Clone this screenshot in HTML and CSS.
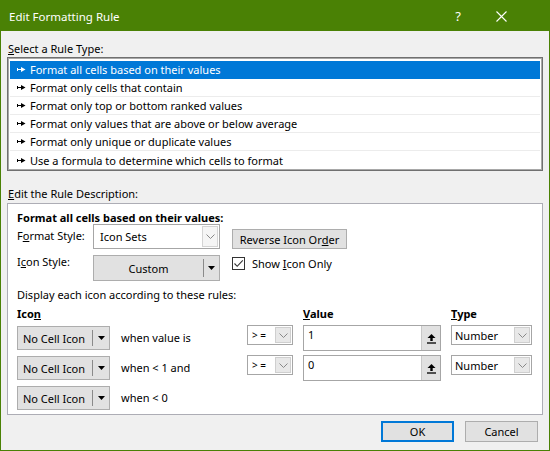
FILE: index.html
```html
<!DOCTYPE html>
<html>
<head>
<meta charset="utf-8">
<link rel="stylesheet" href="styles.css">
</head>
<body>
<div class="window">
  <div class="titlebar">
    <span class="title">Edit Formatting Rule</span>
    <span class="help">?</span>
    <span class="close"><svg width="11" height="11" viewBox="0 0 11 11"><path d="M0.5 0.5L10.5 10.5M10.5 0.5L0.5 10.5" stroke="#fff" stroke-width="1.1" fill="none"/></svg></span>
  </div>
  <div class="content">
    <div class="label"><u>S</u>elect a Rule Type:</div>
    <div class="listbox">
      <div class="item selected"><svg class="arr" width="9" height="7" viewBox="0 0 9 7"><path d="M0.5 2v3M0.5 3.5H4" stroke="currentColor" stroke-width="1" fill="none"/><path d="M4 1L8.5 3.5L4 6Z" fill="currentColor"/></svg>Format all cells based on their values</div>
      <div class="item"><svg class="arr" width="9" height="7" viewBox="0 0 9 7"><path d="M0.5 2v3M0.5 3.5H4" stroke="currentColor" stroke-width="1" fill="none"/><path d="M4 1L8.5 3.5L4 6Z" fill="currentColor"/></svg>Format only cells that contain</div>
      <div class="item"><svg class="arr" width="9" height="7" viewBox="0 0 9 7"><path d="M0.5 2v3M0.5 3.5H4" stroke="currentColor" stroke-width="1" fill="none"/><path d="M4 1L8.5 3.5L4 6Z" fill="currentColor"/></svg>Format only top or bottom ranked values</div>
      <div class="item"><svg class="arr" width="9" height="7" viewBox="0 0 9 7"><path d="M0.5 2v3M0.5 3.5H4" stroke="currentColor" stroke-width="1" fill="none"/><path d="M4 1L8.5 3.5L4 6Z" fill="currentColor"/></svg>Format only values that are above or below average</div>
      <div class="item"><svg class="arr" width="9" height="7" viewBox="0 0 9 7"><path d="M0.5 2v3M0.5 3.5H4" stroke="currentColor" stroke-width="1" fill="none"/><path d="M4 1L8.5 3.5L4 6Z" fill="currentColor"/></svg>Format only unique or duplicate values</div>
      <div class="item last"><svg class="arr" width="9" height="7" viewBox="0 0 9 7"><path d="M0.5 2v3M0.5 3.5H4" stroke="currentColor" stroke-width="1" fill="none"/><path d="M4 1L8.5 3.5L4 6Z" fill="currentColor"/></svg>Use a formula to determine which cells to format</div>
    </div>
    <div class="label label-desc"><u>E</u>dit the Rule Description:</div>
    <div class="desc">
      <div class="heading">Format all cells based on their values:</div>
      <div class="style-grid">
        <div class="flabel">F<u>o</u>rmat Style:</div>
        <div class="combo combo-style">
          <span class="combo-text">Icon Sets</span>
          <span class="dd"><svg width="9" height="5" viewBox="0 0 9 5"><path d="M0.5 0.5L4.5 4.5L8.5 0.5" stroke="#888" fill="none"/></svg></span>
        </div>
        <div class="btn btn-rev">Reverse Icon Or<u>d</u>er</div>
        <div class="flabel flabel2">I<u>c</u>on Style:</div>
        <div class="split split-style">
          <span class="split-text">Custom</span>
          <span class="split-arrow"><svg width="7" height="4" viewBox="0 0 7 4"><path d="M0 0H7L3.5 4Z" fill="#000"/></svg></span>
        </div>
        <div class="check">
          <span class="box"><svg width="11" height="11" viewBox="0 0 11 11"><path d="M1.5 5.5L4.2 8.3L9.8 2.3" stroke="#333" stroke-width="1.1" fill="none"/></svg></span>
          <span>Show <u>I</u>con Only</span>
        </div>
      </div>
      <div class="display">Display each icon according to these rules:</div>
      <div class="rules">
        <div class="hdr">Ico<u>n</u></div>
        <div></div>
        <div></div>
        <div class="hdr"><u>V</u>alue</div>
        <div class="hdr"><u>T</u>ype</div>

        <div class="split split-icon">
          <span class="split-text">No Cell Icon</span>
          <span class="split-arrow"><svg width="7" height="4" viewBox="0 0 7 4"><path d="M0 0H7L3.5 4Z" fill="#000"/></svg></span>
        </div>
        <div class="when">when value is</div>
        <div class="combo combo-op">
          <span class="combo-text op-text">&gt; =</span>
          <span class="dd dd-small"><svg width="9" height="5" viewBox="0 0 9 5"><path d="M0.5 0.5L4.5 4.5L8.5 0.5" stroke="#888" fill="none"/></svg></span>
        </div>
        <div class="value">
          <span class="value-text">1</span>
          <span class="ref"><svg width="11" height="11" viewBox="0 0 11 11"><path d="M5.5 1L1.5 5H4.3V8H6.7V5H9.5Z" fill="#000"/><path d="M1 10H10" stroke="#000" stroke-width="1.3"/></svg></span>
        </div>
        <div class="combo combo-type">
          <span class="combo-text">Number</span>
          <span class="dd dd-small"><svg width="9" height="5" viewBox="0 0 9 5"><path d="M0.5 0.5L4.5 4.5L8.5 0.5" stroke="#888" fill="none"/></svg></span>
        </div>

        <div class="split split-icon">
          <span class="split-text">No Cell Icon</span>
          <span class="split-arrow"><svg width="7" height="4" viewBox="0 0 7 4"><path d="M0 0H7L3.5 4Z" fill="#000"/></svg></span>
        </div>
        <div class="when">when &lt; 1 and</div>
        <div class="combo combo-op">
          <span class="combo-text op-text">&gt; =</span>
          <span class="dd dd-small"><svg width="9" height="5" viewBox="0 0 9 5"><path d="M0.5 0.5L4.5 4.5L8.5 0.5" stroke="#888" fill="none"/></svg></span>
        </div>
        <div class="value">
          <span class="value-text">0</span>
          <span class="ref"><svg width="11" height="11" viewBox="0 0 11 11"><path d="M5.5 1L1.5 5H4.3V8H6.7V5H9.5Z" fill="#000"/><path d="M1 10H10" stroke="#000" stroke-width="1.3"/></svg></span>
        </div>
        <div class="combo combo-type">
          <span class="combo-text">Number</span>
          <span class="dd dd-small"><svg width="9" height="5" viewBox="0 0 9 5"><path d="M0.5 0.5L4.5 4.5L8.5 0.5" stroke="#888" fill="none"/></svg></span>
        </div>

        <div class="split split-icon">
          <span class="split-text">No Cell Icon</span>
          <span class="split-arrow"><svg width="7" height="4" viewBox="0 0 7 4"><path d="M0 0H7L3.5 4Z" fill="#000"/></svg></span>
        </div>
        <div class="when">when &lt; 0</div>
        <div></div>
        <div></div>
        <div></div>
      </div>
    </div>
    <div class="buttons">
      <div class="btn btn-ok">OK</div>
      <div class="btn btn-cancel">Cancel</div>
    </div>
  </div>
</div>
</body>
</html>
```

FILE: styles.css
```css
* { box-sizing: border-box; }
html, body { margin: 0; padding: 0; }
body {
  width: 550px;
  height: 451px;
  font-family: "Noto Sans", "Segoe UI", sans-serif;
  font-size: 11px;
  color: #000;
  background: #f0f0f0;
}
u { text-decoration: underline; text-underline-offset: 1px; }
.window {
  width: 550px;
  height: 451px;
  border: 1px solid #4a8105;
  background: #f0f0f0;
  display: flex;
  flex-direction: column;
}
.titlebar {
  height: 30px;
  background: #4a8105;
  color: #fff;
  display: flex;
  align-items: center;
  flex: none;
}
.title { padding-left: 8px; font-size: 11.5px; flex: 1; }
.help { font-size: 13px; width: 20px; text-align: center; margin-right: 23px; }
.close { width: 20px; margin-right: 38px; display: flex; justify-content: center; align-items: center; }
.content { padding: 0 5px 0 6px; }
.label { padding-left: 1px; margin-top: 10px; line-height: 15px; height: 15px; }
.label-desc { margin-top: 15px; }
.listbox {
  margin-top: 1px;
  width: 536px;
  border: 1px solid #707070;
  box-shadow: inset 0 0 0 1px #a8a8a8;
  background: #fff;
  padding: 3px 2px 1px 2px;
}
.item {
  height: 18px;
  line-height: 17px;
  border-bottom: 1px solid #ececec;
  padding-left: 7px;
  display: flex;
  align-items: center;
  white-space: nowrap;
}
.item.last { border-bottom: none; }
.item.selected { background: #0078d7; color: #fff; border-bottom-color: #0078d7; }
.arr { margin-right: 4px; flex: none; }
.desc {
  margin-top: 2px;
  width: 536px;
  height: 212px;
  border: 1px solid #adadb5;
  background: #fff;
  padding: 7px 0 0 9px;
}
.heading { font-weight: bold; line-height: 13px; height: 13px; }
.style-grid {
  display: grid;
  grid-template-columns: 76px 139px auto;
  grid-template-rows: 25px 26px;
  row-gap: 6px;
  align-items: start;
}
.flabel { line-height: 15px; margin-top: 4px; }
.flabel2 { margin-top: -1px; }
.combo {
  border: 1px solid #a6a6a6;
  background: #fff;
  display: flex;
  align-items: center;
}
.combo-style { width: 127px; height: 25px; padding-left: 6px; }
.combo-text { flex: 1; white-space: nowrap; }
.dd {
  width: 16px;
  height: 21px;
  margin-right: 1px;
  border: 1px solid #d4d4d4;
  background: #f5f5f5;
  display: flex;
  align-items: center;
  justify-content: center;
}
.btn {
  background: #e1e1e1;
  border: 1px solid #adadad;
  display: flex;
  align-items: center;
  justify-content: center;
  white-space: nowrap;
}
.btn-rev { width: 115px; height: 20px; margin-top: 5px; }
.split {
  background: #e1e1e1;
  border: 1px solid #adadad;
  display: flex;
  align-items: stretch;
}
.split-text { flex: 1; display: flex; align-items: center; justify-content: center; white-space: nowrap; }
.split-arrow {
  display: flex; align-items: center; justify-content: center;
  border-left: 1px solid #8a8a8a;
  margin: 3px 0;
}
.split-style { width: 127px; height: 26px; }
.split-style .split-arrow { width: 16px; }
.check { display: flex; align-items: center; margin-top: 1px; gap: 7px; height: 15px; }
.box {
  width: 13px; height: 13px;
  border: 1px solid #333;
  background: #fff;
  display: flex; align-items: center; justify-content: center;
}
.display { margin-top: 6px; line-height: 15px; height: 15px; }
.rules {
  margin-top: 4px;
  display: grid;
  grid-template-columns: 93px 117px 46px 138px 81px;
  column-gap: 10px;
  grid-template-rows: 15px 26px 26px 26px;
  row-gap: 4px;
  align-items: start;
}
.rules .hdr { font-weight: bold; line-height: 15px; }
.split-icon { width: 93px; height: 24px; margin-top: 1px; }
.split-icon .split-text { justify-content: flex-start; padding-left: 5px; }
.split-icon .split-arrow { width: 17px; }
.when { padding-left: 1px; line-height: 26px; }
.combo-op { width: 46px; height: 20px; padding-left: 4px; }
.op-text { font-size: 10px; }
.dd-small { height: 16px; width: 16px; background: #e8e8e8; border-color: #cfcfcf; }
.combo-type { width: 81px; height: 20px; padding-left: 3px; }
.value {
  width: 138px; height: 26px;
  border: 1px solid #a6a6a6;
  background: #fff;
  display: flex;
  align-items: stretch;
}
.value-text { flex: 1; padding-left: 4px; line-height: 18px; }
.ref {
  width: 19px;
  background: #e1e1e1;
  border-left: 1px solid #c8c8c8;
  display: flex; align-items: center; justify-content: center;
}
.buttons {
  display: flex;
  justify-content: flex-end;
  gap: 11px;
  margin-top: 6px;
  padding-right: 6px;
}
.btn-ok { width: 73px; height: 21px; border: 2px solid #0078d7; }
.btn-cancel { width: 73px; height: 21px; }
```
